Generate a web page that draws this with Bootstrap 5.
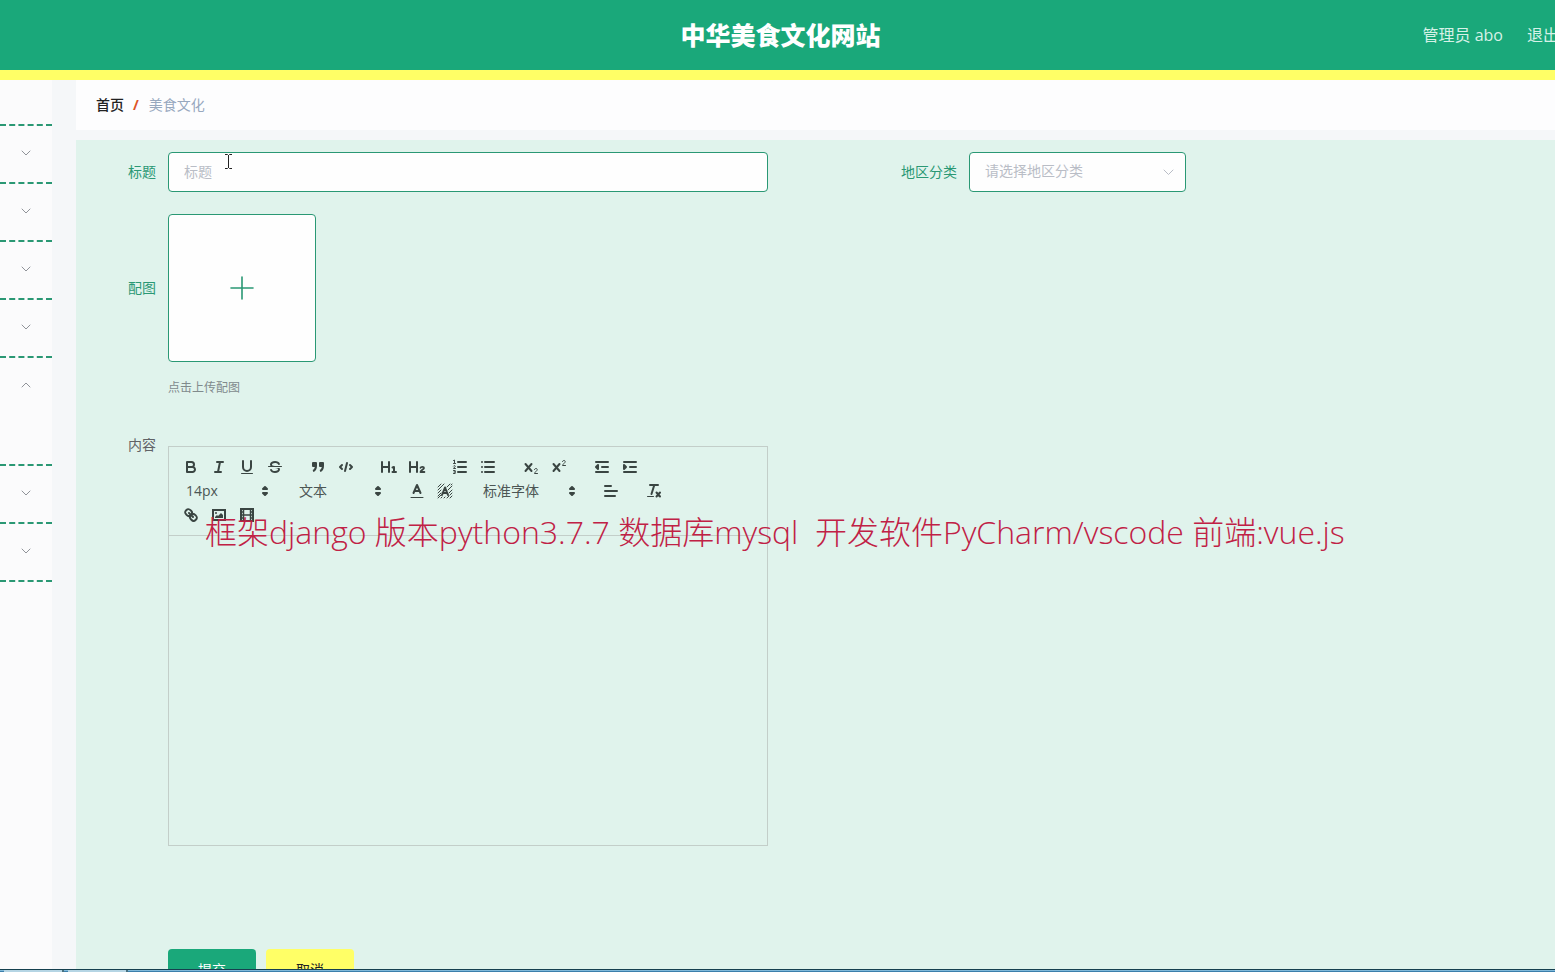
<!DOCTYPE html>
<html lang="zh-CN">
<head>
<meta charset="utf-8">
<meta name="viewport" content="width=device-width, initial-scale=1">
<title>中华美食文化网站</title>
<link href="https://cdn.jsdelivr.net/npm/bootstrap@5.3.0/dist/css/bootstrap.min.css" rel="stylesheet">
<script src="https://cdn.jsdelivr.net/npm/bootstrap@5.3.0/dist/js/bootstrap.bundle.min.js" defer></script>
<style>
:root { --brand: #1aa87a; --accent: #ffff66; --mint: #e0f3ec; --line: #2a9874; }
body { font-family: "Open Sans", "Noto Sans CJK SC", sans-serif; font-size: 14px; line-height: 20px; background: #f5f7f9; color: #606266; }
.site-header { width: calc(100% + 10px); height: 80px; background: var(--brand); border-bottom: 10px solid var(--accent); padding-left: 2px; padding-right: 6px; }
.site-title { font-size: 25px; line-height: 32px; font-weight: 900; }
.site-header a, .site-header span { font-size: 16px; line-height: 24px; color: #d6f1e7; }
.side { width: 52px; background: #fbfbfc; }
.side-item { height: 58px; border: 0; border-bottom: 2px dashed var(--line); background: none; color: #909399; padding: 0 0 4px; }
.side-top { height: 46px; }
.side-open { height: 108px; padding-bottom: 54px; }
.page-area { margin-left: 24px; min-width: 0; }
.crumbs { height: 50px; background: #fdfdfe; padding: 0 20px; margin-bottom: 10px; --bs-breadcrumb-divider: "/"; }
.crumbs .breadcrumb-item + .breadcrumb-item { padding-left: 9px; }
.crumbs .breadcrumb-item + .breadcrumb-item::before { color: #dd5426; font-weight: 700; padding-right: 10px; }
.crumbs .breadcrumb-item a { color: #222; font-weight: 500; }
.crumbs .active { color: #97a8be; }
.form-panel { background: var(--mint); padding: 12px; }
.field-label { width: 80px; padding-right: 12px; text-align: right; color: var(--line); flex: none; }
.field-plain { color: #606266; }
.wide { width: 600px; }
.box { height: 40px; border: 1px solid var(--line); border-radius: 4px; background-color: #fefefe; font-size: 14px; line-height: 20px; padding: 0 15px 2px; }
.box::placeholder { color: #b9bdc6; }
.region-wrap { width: 217px; }
select.box { color: #b9bdc6; background-image: none; }
.region-wrap svg { right: 12px; top: 15px; color: #b9bdc6; pointer-events: none; }
.two-up { column-gap: 121px; margin-bottom: 22px; }
.upload { width: 148px; height: 148px; border: 1px solid var(--line); border-radius: 4px; background: #fefefe; color: var(--line); }
.hint { font-size: 12px; color: #808a8c; margin: 16px 0 37px 80px; }
.editor { border: 1px solid #c3cec9; margin-top: 11px; }
.tools { padding: 8px; border-bottom: 1px solid #c3cec9; color: #3a4542; }
.tool-set { margin-right: 15px; height: 24px; }
.tool-set button { width: 28px; height: 24px; border: 0; background: none; padding: 3px 5px; color: inherit; display: flex; }
.tools svg { width: 18px; height: 18px; }
.pick { width: 98px; }
.pick-font { width: 108px; }
.pick select { appearance: none; border: 0; background: none; width: 100%; height: 24px; padding: 0 0 0 9px; font-size: 14px; line-height: 24px; color: #4c5654; }
.pick svg { right: 1px; top: 3px; pointer-events: none; }
.s { fill: none; stroke: currentColor; stroke-width: 2; stroke-linecap: round; stroke-linejoin: round; }
.t { stroke-width: 1; }
.f { fill: currentColor; }
.body-text { height: 309px; border: 0; background: none; resize: none; display: block; width: 100%; padding: 12px 15px; }
.actions { margin: 103px 0 0 80px; gap: 10px; }
.act { width: 88px; height: 40px; border-radius: 4px; font-size: 14px; padding: 0; }
.act-ok, .act-ok:hover { background: var(--brand); color: #fff; }
.act-no, .act-no:hover { background: var(--accent); color: #222; }
.caption-line { left: 205px; top: 508px; font-size: 32px; line-height: 48px; font-weight: 300; color: #c02145; white-space: pre; pointer-events: none; }
.pointer { left: 223px; top: 154px; pointer-events: none; }
.taskbar-edge { height: 3px; border-top: 1px solid #16404f; background: linear-gradient(#7fb9da 50%, #3b7fab 50%); }
.taskbar-tab { width: 60px; height: 2px; background: #b5d5e4; border-right: 2px solid #47707f; margin-left: 4px; }
</style>
</head>
<body class="vh-100 overflow-hidden d-flex flex-column position-relative">
<header class="site-header d-flex align-items-center flex-shrink-0">
  <div class="flex-fill w-50"></div>
  <h1 class="site-title text-white text-nowrap m-0">中华美食文化网站</h1>
  <div class="flex-fill w-50 d-flex justify-content-end gap-4 text-nowrap">
    <span>管理员 abo</span><a href="#" class="text-decoration-none">退出</a>
  </div>
</header>
<div class="d-flex flex-fill overflow-hidden">
  <nav class="side flex-shrink-0 d-flex flex-column" aria-label="菜单">
    <div class="side-item side-top"></div>
    <button class="side-item" aria-label="展开"><svg width="10" height="6" class="s t"><path d="M1 1l4 4 4-4"/></svg></button>
    <button class="side-item" aria-label="展开"><svg width="10" height="6" class="s t"><path d="M1 1l4 4 4-4"/></svg></button>
    <button class="side-item" aria-label="展开"><svg width="10" height="6" class="s t"><path d="M1 1l4 4 4-4"/></svg></button>
    <button class="side-item" aria-label="展开"><svg width="10" height="6" class="s t"><path d="M1 1l4 4 4-4"/></svg></button>
    <button class="side-item side-open" aria-label="收起"><svg width="10" height="6" class="s t"><path d="M1 5l4-4 4 4"/></svg></button>
    <button class="side-item" aria-label="展开"><svg width="10" height="6" class="s t"><path d="M1 1l4 4 4-4"/></svg></button>
    <button class="side-item" aria-label="展开"><svg width="10" height="6" class="s t"><path d="M1 1l4 4 4-4"/></svg></button>
  </nav>
  <main class="page-area flex-fill d-flex flex-column">
    <nav class="crumbs d-flex align-items-center flex-shrink-0" aria-label="breadcrumb">
      <ol class="breadcrumb m-0">
        <li class="breadcrumb-item"><a href="#" class="text-decoration-none">首页</a></li>
        <li class="breadcrumb-item active">美食文化</li>
      </ol>
    </nav>
    <form class="form-panel flex-fill">
      <div class="two-up d-flex">
        <div class="d-flex align-items-center">
          <label class="field-label" for="title">标题</label>
          <input id="title" class="form-control box wide" placeholder="标题">
        </div>
        <div class="d-flex align-items-center">
          <label class="field-label" for="region">地区分类</label>
          <div class="region-wrap position-relative">
            <select id="region" class="form-select box"><option>请选择地区分类</option></select>
            <svg class="position-absolute s t" width="11" height="10"><path d="M1 3l4.500 4.500L10 3"/></svg>
          </div>
        </div>
      </div>
      <div class="d-flex align-items-center">
        <label class="field-label" for="upload">配图</label>
        <button type="button" id="upload" class="upload"><svg width="24" height="24" viewBox="0 0 24 24" class="s"><path style="stroke-width:1.6" d="M12 1v22M1 12h22"/></svg></button>
      </div>
      <div class="hint">点击上传配图</div>
      <div class="d-flex">
        <label class="field-label field-plain" for="content">内容</label>
        <div class="editor wide">
          <div class="tools d-flex flex-wrap">
            <div class="tool-set d-flex">
              <button type="button" aria-label="粗体"><svg viewBox="0 0 18 18"><path class="s" d="M5 4h4.500A2.500 2.500 0 0 1 12 6.500 2.500 2.500 0 0 1 9.500 9H5zM5 9h5.500A2.500 2.500 0 0 1 13 11.500 2.500 2.500 0 0 1 10.500 14H5z"/></svg></button>
              <button type="button" aria-label="斜体"><svg viewBox="0 0 18 18"><path class="s" d="M7 4h6M5 14h6M8 14l2-10"/></svg></button>
              <button type="button" aria-label="下划线"><svg viewBox="0 0 18 18"><path class="s" d="M5 3v6a4 4 0 0 0 8 0V3"/><rect class="f" x="3" y="15" width="12" height="1" rx=".5"/></svg></button>
              <button type="button" aria-label="删除线"><svg viewBox="0 0 18 18"><path class="s t" d="M15.500 8.500h-13"/><path class="f" d="M9.007 8C6.542 7.791 6 7.519 6 6.500 6 5.792 7.283 5 9 5c1.571 0 2.765.679 2.969 1.309a1 1 0 0 0 1.900-.617C13.356 4.106 11.354 3 9 3 6.200 3 4 4.538 4 6.500A3.200 3.200 0 0 0 4.500 8ZM8.984 10C11.457 10.208 12 10.479 12 11.500c0 .708-1.283 1.500-3 1.500-1.571 0-2.765-.679-2.969-1.309a1 1 0 1 0-1.900.617C4.644 13.894 6.646 15 9 15c2.800 0 5-1.538 5-3.500a3.200 3.200 0 0 0-.500-1.500Z"/></svg></button>
            </div>
            <div class="tool-set d-flex">
              <button type="button" aria-label="引用"><svg viewBox="0 0 18 18"><g class="f"><rect x="4" y="5" width="3" height="3"/><rect x="11" y="5" width="3" height="3"/><path stroke="currentColor" stroke-width="2" stroke-linejoin="round" d="M7 8c0 4.031-3 5-3 5M4 5h3v3H4zM14 8c0 4.031-3 5-3 5M11 5h3v3h-3z" fill-rule="evenodd"/></g></svg></button>
              <button type="button" aria-label="代码"><svg viewBox="0 0 18 18"><path class="s" d="M5 7L3 9l2 2M13 7l2 2-2 2M10 5L8 13"/></svg></button>
            </div>
            <div class="tool-set d-flex">
              <button type="button" aria-label="标题一"><svg viewBox="0 0 18 18"><path class="s" d="M2 4v10M9 4v10M2 9h7"/><path class="s" style="stroke-width:2" d="M12.500 9.500l1.500-.5V14M12.500 14h3.500"/></svg></button>
              <button type="button" aria-label="标题二"><svg viewBox="0 0 18 18"><path class="s" d="M2 4v10M9 4v10M2 9h7"/><path class="s" style="stroke-width:1.800" d="M12.500 9.800c.4-1.300 3.500-1.300 3.500.2 0 1.300-3.500 2.400-3.500 4h3.900"/></svg></button>
            </div>
            <div class="tool-set d-flex">
              <button type="button" aria-label="有序列表"><svg viewBox="0 0 18 18"><path class="s" d="M7 4h8M7 9h8M7 14h8"/><path class="s t" d="M2.500 2.500l1-.5v3.500M2.500 5.500h2M2.500 8c.5-.8 2-.5 1.700.4L2.500 10.500h2M2.500 12.500h1.700v1.500H3M4.200 14v1.500H2.500"/></svg></button>
              <button type="button" aria-label="无序列表"><svg viewBox="0 0 18 18"><path class="s" d="M6 4h9M6 9h9M6 14h9M3 4h0M3 9h0M3 14h0"/></svg></button>
            </div>
            <div class="tool-set d-flex">
              <button type="button" aria-label="下标"><svg viewBox="0 0 18 18"><path class="s" d="M3.500 6l6 7M9.500 6l-6 7"/><path class="s t" d="M12.500 11.500c.2-1.500 2.800-1.500 2.700.2 0 1.100-2.200 2-2.700 3.800h3"/></svg></button>
              <button type="button" aria-label="上标"><svg viewBox="0 0 18 18"><path class="s" d="M3.500 6l6 7M9.500 6l-6 7"/><path class="s t" d="M12.500 3.500c.2-1.500 2.800-1.500 2.700.2 0 1.100-2.200 2-2.700 3.800h3"/></svg></button>
            </div>
            <div class="tool-set d-flex">
              <button type="button" aria-label="减少缩进"><svg viewBox="0 0 18 18"><path class="s" d="M3 14h12M3 4h12M9 9h6"/><path class="s" style="fill:currentColor" d="M5 7v4L3 9z"/></svg></button>
              <button type="button" aria-label="增加缩进"><svg viewBox="0 0 18 18"><path class="s" d="M3 14h12M3 4h12M9 9h6"/><path class="s" style="fill:currentColor" d="M3 7v4l2-2z"/></svg></button>
            </div>
            <div class="tool-set pick position-relative"><select aria-label="字号"><option>14px</option></select><svg class="position-absolute" viewBox="0 0 18 18"><path class="s" style="fill:currentColor" d="M7 7l2-2 2 2zM7 11l2 2 2-2z"/></svg></div>
            <div class="tool-set pick position-relative"><select aria-label="段落"><option>文本</option></select><svg class="position-absolute" viewBox="0 0 18 18"><path class="s" style="fill:currentColor" d="M7 7l2-2 2 2zM7 11l2 2 2-2z"/></svg></div>
            <div class="tool-set d-flex">
              <button type="button" aria-label="文字颜色"><svg viewBox="0 0 18 18"><path class="s t" d="M3 15.500h12"/><path class="s" d="M5.500 11L9 3l3.500 8M6.500 9h5"/></svg></button>
              <button type="button" aria-label="背景颜色"><svg viewBox="0 0 18 18"><path class="s t" d="M2 5l3-3M2 8l6-6M2 11l3-3M2 14l3-3M2 16l3-3M5 16l1-1M8 16l1-1M11 16l2-2M14 16l2-2M14 13l2-2M13 11l3-3M12 8l4-4M11 5l3-3M15 3l1-1"/><path class="s" d="M6 13L9 5.500l3 7.500M7 11h4"/></svg></button>
            </div>
            <div class="tool-set pick pick-font position-relative"><select aria-label="字体"><option>标准字体</option></select><svg class="position-absolute" viewBox="0 0 18 18"><path class="s" style="fill:currentColor" d="M7 7l2-2 2 2zM7 11l2 2 2-2z"/></svg></div>
            <div class="tool-set d-flex">
              <button type="button" aria-label="对齐"><svg viewBox="0 0 18 18"><path class="s" d="M3 9h12M3 14h10M3 4h6"/></svg></button>
            </div>
            <div class="tool-set d-flex">
              <button type="button" aria-label="清除格式"><svg viewBox="0 0 18 18"><path class="s" d="M5 3h8M6.500 12L9.300 3M11.500 10.500l3.500 4M15 10.500l-3.500 4"/><rect class="f" x="2" y="14" width="7" height="1" rx=".5"/></svg></button>
            </div>
            <div class="tool-set d-flex">
              <button type="button" aria-label="链接"><svg viewBox="0 0 18 18"><path class="s" d="M7 7l4 4M8.900 4.577a3.476 3.476 0 0 1 .360 4.679A3.476 3.476 0 0 1 4.577 8.900C3.185 7.500 2.035 6.400 4.217 4.217S7.500 3.185 8.900 4.577ZM13.423 9.100a3.476 3.476 0 0 0-4.679-.360 3.476 3.476 0 0 0 .360 4.679c1.392 1.392 2.500 2.542 4.679.360S14.815 10.500 13.423 9.100Z"/></svg></button>
              <button type="button" aria-label="图片"><svg viewBox="0 0 18 18"><rect class="s" x="3" y="4" width="12" height="10" style="stroke-linejoin:miter"/><circle class="f" cx="6" cy="7" r="1"/><path class="f" d="M5 12v-1l2-2 1 1 3-3 2 2v3z"/></svg></button>
              <button type="button" aria-label="视频"><svg viewBox="0 0 18 18"><path class="s" style="stroke-linejoin:miter" d="M3 3h12v12H3z"/><path class="s" style="stroke-width:1.500" d="M5.500 3v12M12.500 3v12M5.500 9h7M3 6h2.500M3 9h2.500M3 12h2.500M12.500 6H15M12.500 9H15M12.500 12H15"/></svg></button>
            </div>
          </div>
          <textarea id="content" class="body-text"></textarea>
        </div>
      </div>
      <div class="actions d-flex">
        <button type="button" class="btn act act-ok">提交</button>
        <button type="button" class="btn act act-no">取消</button>
      </div>
    </form>
  </main>
</div>
<div class="taskbar-edge flex-shrink-0 d-flex"><div class="taskbar-tab"></div><div class="taskbar-tab"></div></div>
<div class="caption-line position-absolute">框架django 版本python3.7.7 数据库mysql  开发软件PyCharm/vscode 前端:vue.js</div>
<svg class="pointer position-absolute" width="11" height="17" viewBox="0 0 11 17" aria-hidden="true"><path d="M2 .5h2.500l1 1 1-1H9M5.500 1v13M2 14.500h2.500l1-1 1 1H9" fill="none" stroke="#222"/></svg>
</body>
</html>
